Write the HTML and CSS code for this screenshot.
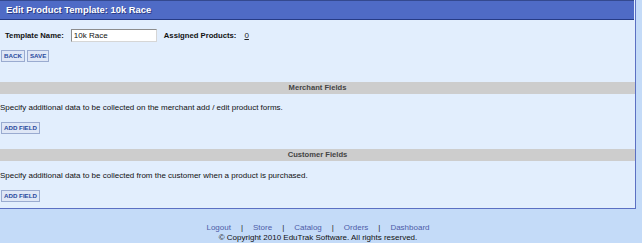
FILE: index.html
```html
<!DOCTYPE html>
<html>
<head>
<meta charset="utf-8">
<link rel="stylesheet" href="styles.css">
</head>
<body>
<div class="panel">
  <div class="panel-head">Edit Product Template: 10k Race</div>
  <div class="form-row">
    <span class="lbl">Template Name:</span>
    <input class="txt" type="text" value="10k Race">
    <span class="lbl lbl-2">Assigned Products:</span>
    <a class="count" href="#">0</a>
  </div>
  <div class="btn-row">
    <button class="btn">BACK</button>
    <button class="btn">SAVE</button>
  </div>
  <div class="bar bar-1">Merchant Fields</div>
  <p class="desc">Specify additional data to be collected on the merchant add / edit product forms.</p>
  <div class="btn-row btn-row-add"><button class="btn">ADD FIELD</button></div>
  <div class="bar bar-2">Customer Fields</div>
  <p class="desc desc-2">Specify additional data to be collected from the customer when a product is purchased.</p>
  <div class="btn-row btn-row-add"><button class="btn">ADD FIELD</button></div>
</div>
<div class="footer">
  <div class="links">
    <a href="#">Logout</a><span class="sep">|</span><a href="#">Store</a><span class="sep">|</span><a href="#">Catalog</a><span class="sep">|</span><a href="#">Orders</a><span class="sep">|</span><a href="#">Dashboard</a>
  </div>
  <div class="copy">© Copyright 2010 EduTrak Software. All rights reserved.</div>
</div>
</body>
</html>
```
FILE: styles.css
```css
html, body {
  margin: 0;
  padding: 0;
  background: #c4dbf8;
  font-family: "Liberation Sans", Arial, sans-serif;
  font-size: 8px;
  color: #111;
}
.panel {
  width: 635px;
  background: #e2eefd;
  border-right: 1px solid #5b70c3;
  border-bottom: 1px solid #5b70c3;
  padding-bottom: 6px;
}
.panel-head {
  width: 628px;
  height: 18px;
  line-height: 18px;
  padding-left: 6px;
  background: #4f6bc6;
  border-top: 1px solid #34498f;
  border-bottom: 1px solid #263b86;
  color: #fff;
  font-weight: bold;
  font-size: 9.4px;
  text-shadow: 1px 1px 0 #2c3d85;
}
.form-row {
  display: flex;
  align-items: center;
  height: 13px;
  margin-top: 9px;
  padding-left: 5px;
  font-size: 7.7px;
}
.lbl {
  font-weight: bold;
  margin-right: 7px;
}
.lbl-2 {
  margin-left: 7px;
  margin-right: 8px;
}
.txt {
  box-sizing: border-box;
  width: 86px;
  height: 13px;
  margin: 0;
  padding: 0 2px;
  border: 1px solid #8d8d8d;
  border-right-color: #d6d6d6;
  border-bottom-color: #d6d6d6;
  background: #fff;
  font-family: "Liberation Sans", Arial, sans-serif;
  font-size: 8px;
  color: #111;
}
.count {
  color: #222;
  text-decoration: underline;
  font-size: 8px;
}
.btn-row {
  display: flex;
  gap: 2px;
  height: 12px;
  margin-top: 8px;
  padding-left: 1px;
}
.btn {
  box-sizing: border-box;
  height: 12px;
  margin: 0;
  padding: 0 2px;
  background: #dfe7f6;
  border: 1px solid #9aabd0;
  color: #2a4b9e;
  font-family: "Liberation Sans", Arial, sans-serif;
  font-weight: bold;
  font-size: 6.2px;
  line-height: 10px;
}
.bar {
  height: 12px;
  line-height: 12px;
  background: #cdcdcd;
  color: #444;
  font-weight: bold;
  font-size: 7.6px;
  text-align: center;
}
.bar-1 { margin-top: 20px; }
.bar-2 { margin-top: 15px; }
.desc {
  margin: 8px 0 0 0;
  line-height: 12px;
}
.desc-2 { margin-top: 9px; }
.btn-row-add { margin-top: 8px; }
.footer {
  width: 636px;
  padding-top: 14px;
  text-align: center;
  line-height: 10px;
}
.links a {
  color: #4d5ba8;
  text-decoration: none;
}
.sep {
  margin: 0 10px;
  color: #222;
}
.copy {
  color: #111;
}
```
